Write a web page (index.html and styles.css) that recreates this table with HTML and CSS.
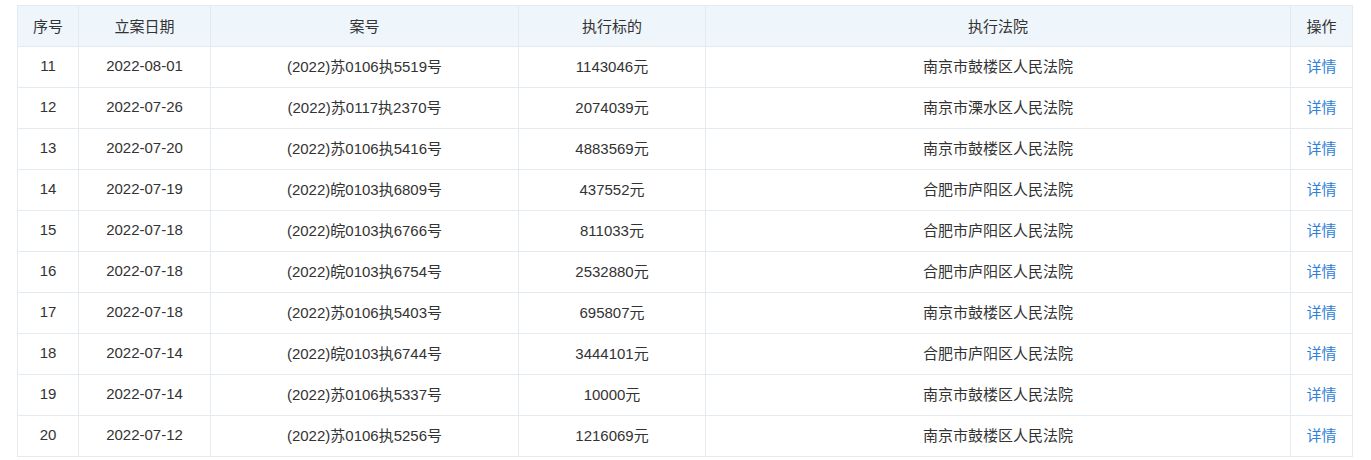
FILE: index.html
```html
<!DOCTYPE html>
<html lang="zh">
<head>
<meta charset="utf-8">
<title>执行信息</title>
<link rel="stylesheet" href="styles.css">
</head>
<body>
<div class="wrap">
<table class="grid">
<colgroup>
<col class="c1"><col class="c2"><col class="c3"><col class="c4"><col class="c5"><col class="c6">
</colgroup>
<thead>
<tr><th>序号</th><th>立案日期</th><th>案号</th><th>执行标的</th><th>执行法院</th><th>操作</th></tr>
</thead>
<tbody>
<tr><td>11</td><td>2022-08-01</td><td>(2022)苏0106执5519号</td><td>1143046元</td><td>南京市鼓楼区人民法院</td><td><a class="link" href="#">详情</a></td></tr>
<tr><td>12</td><td>2022-07-26</td><td>(2022)苏0117执2370号</td><td>2074039元</td><td>南京市溧水区人民法院</td><td><a class="link" href="#">详情</a></td></tr>
<tr><td>13</td><td>2022-07-20</td><td>(2022)苏0106执5416号</td><td>4883569元</td><td>南京市鼓楼区人民法院</td><td><a class="link" href="#">详情</a></td></tr>
<tr><td>14</td><td>2022-07-19</td><td>(2022)皖0103执6809号</td><td>437552元</td><td>合肥市庐阳区人民法院</td><td><a class="link" href="#">详情</a></td></tr>
<tr><td>15</td><td>2022-07-18</td><td>(2022)皖0103执6766号</td><td>811033元</td><td>合肥市庐阳区人民法院</td><td><a class="link" href="#">详情</a></td></tr>
<tr><td>16</td><td>2022-07-18</td><td>(2022)皖0103执6754号</td><td>2532880元</td><td>合肥市庐阳区人民法院</td><td><a class="link" href="#">详情</a></td></tr>
<tr><td>17</td><td>2022-07-18</td><td>(2022)苏0106执5403号</td><td>695807元</td><td>南京市鼓楼区人民法院</td><td><a class="link" href="#">详情</a></td></tr>
<tr><td>18</td><td>2022-07-14</td><td>(2022)皖0103执6744号</td><td>3444101元</td><td>合肥市庐阳区人民法院</td><td><a class="link" href="#">详情</a></td></tr>
<tr><td>19</td><td>2022-07-14</td><td>(2022)苏0106执5337号</td><td>10000元</td><td>南京市鼓楼区人民法院</td><td><a class="link" href="#">详情</a></td></tr>
<tr><td>20</td><td>2022-07-12</td><td>(2022)苏0106执5256号</td><td>1216069元</td><td>南京市鼓楼区人民法院</td><td><a class="link" href="#">详情</a></td></tr>
</tbody>
</table>
</div>
</body>
</html>
```

FILE: styles.css
```css
html, body {
  margin: 0;
  padding: 0;
  background: #ffffff;
}
.wrap {
  padding: 5px 0 0 17px;
}
.grid {
  border-collapse: collapse;
  table-layout: fixed;
  width: 1335px;
  font-family: "Liberation Sans", Arial, "Noto Sans CJK SC", sans-serif;
  font-size: 15px;
  color: #333333;
}
.c1 { width: 61px; }
.c2 { width: 132px; }
.c3 { width: 308px; }
.c4 { width: 187px; }
.c5 { width: 585px; }
.c6 { width: 62px; }
.grid th,
.grid td {
  border: 1px solid #e3eaf0;
  height: 36px;
  padding: 0 0 4px;
  text-align: center;
  vertical-align: middle;
  font-weight: normal;
  white-space: nowrap;
}
.grid thead th {
  height: 38px;
  padding: 0 0 2px;
  background: #eef5fb;
  color: #333333;
}
.link {
  color: #2f80d8;
  text-decoration: none;
}
```
